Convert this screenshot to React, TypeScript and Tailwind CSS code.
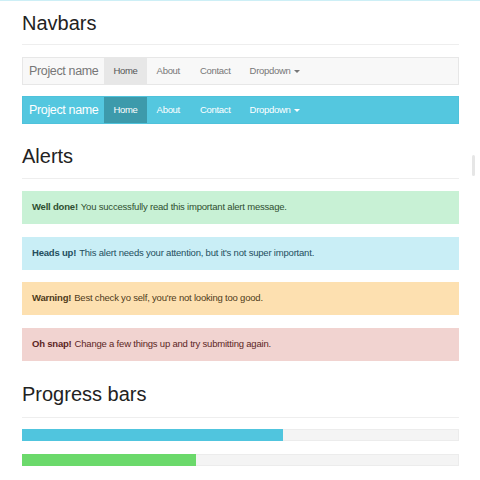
export default function App() {
  const nav = ['About', 'Contact'];
  return (
    <div className="relative h-[480px] w-[480px] overflow-hidden bg-white font-['Liberation_Sans',Arial,sans-serif]">
      <div className="h-px w-full bg-[#cdeff6]" />
      <div className="px-[22px] pr-[21px]">
        {/* Navbars */}
        <h1 className="mt-[11px] text-[20px] leading-[22px] text-[#222]">Navbars</h1>
        <div className="mt-[10px] h-px bg-[#eeeeee]" />
        <div className="mt-[12px] flex h-[28px] items-stretch border border-[#e7e7e7] bg-[#f8f8f8]">
          <span className="flex items-center px-[6px] text-[12.5px] tracking-[-0.35px] text-[#777]">Project name</span>
          <span className="flex items-center bg-[#e7e7e7] px-[9px] text-[9.5px] tracking-[-0.3px] text-[#555]">Home</span>
          {nav.map((n) => (
            <span key={n} className="flex items-center px-[10px] text-[9.5px] tracking-[-0.3px] text-[#777]">{n}</span>
          ))}
          <span className="flex items-center px-[9px] text-[9.5px] tracking-[-0.3px] text-[#777]">
            Dropdown
            <span className="ml-[4px] h-0 w-0 border-x-[3px] border-t-[3px] border-x-transparent border-t-[#777]" />
          </span>
        </div>
        <div className="mt-[11px] flex h-[28px] items-stretch border border-[#4fc2db] bg-[#54c7df]">
          <span className="flex items-center px-[6px] text-[12.5px] tracking-[-0.35px] text-white">Project name</span>
          <span className="flex items-center bg-[#3d9aab] px-[9px] text-[9.5px] tracking-[-0.3px] text-white">Home</span>
          {nav.map((n) => (
            <span key={n} className="flex items-center px-[10px] text-[9.5px] tracking-[-0.3px] text-white">{n}</span>
          ))}
          <span className="flex items-center px-[9px] text-[9.5px] tracking-[-0.3px] text-white">
            Dropdown
            <span className="ml-[4px] h-0 w-0 border-x-[3px] border-t-[3px] border-x-transparent border-t-white" />
          </span>
        </div>

        {/* Alerts */}
        <h1 className="mt-[21px] text-[20px] leading-[22px] text-[#222]">Alerts</h1>
        <div className="mt-[11px] h-px bg-[#eeeeee]" />
        <div className="mt-[12px] flex flex-col gap-[12.5px] text-[9.5px] tracking-[-0.2px]">
          <div className="flex h-[33px] items-center bg-[#c8f1d5] px-[10px] text-[#2f4f30]">
            <b className="mr-[3px]">Well done!</b>You successfully read this important alert message.
          </div>
          <div className="flex h-[33px] items-center bg-[#c9eef6] px-[10px] text-[#244e5e]">
            <b className="mr-[3px]">Heads up!</b>This alert needs your attention, but it's not super important.
          </div>
          <div className="flex h-[33px] items-center bg-[#fde0b0] px-[10px] text-[#4f3b19]">
            <b className="mr-[3px]">Warning!</b>Best check yo self, you're not looking too good.
          </div>
          <div className="flex h-[33px] items-center bg-[#f1d3d0] px-[10px] text-[#5c2624]">
            <b className="mr-[3px]">Oh snap!</b>Change a few things up and try submitting again.
          </div>
        </div>

        {/* Progress bars */}
        <h1 className="mt-[22px] text-[20px] leading-[22px] text-[#222]">Progress bars</h1>
        <div className="mt-[12px] h-px bg-[#eeeeee]" />
        <div className="mt-[11px] flex flex-col gap-[13px]">
          <div className="h-[12px] border border-[#ececec] bg-[#f4f4f4]">
            <div className="-m-px h-[12px] w-[60%] bg-[#50c5de]" />
          </div>
          <div className="h-[12px] border border-[#ececec] bg-[#f4f4f4]">
            <div className="-m-px h-[12px] w-[40%] bg-[#6bd96b]" />
          </div>
        </div>
      </div>
      <div className="absolute left-[472px] top-[155px] h-[21px] w-[3px] rounded-full bg-[#e6e6e6]" />
    </div>
  );
}
